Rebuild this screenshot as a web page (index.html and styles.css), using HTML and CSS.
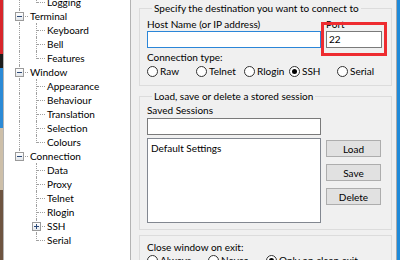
FILE: index.html
```html
<!DOCTYPE html>
<html>

<head>
  <title>PuTTY Configuration</title>
  <link rel="stylesheet" href="styles.css">
</head>

<body>
  <div class="screen">
    <div class="desk desk-left"></div>
    <div class="window">
      <!-- Category tree -->
      <div class="tree">
        <ul class="tree-list">
          <li class="row"><span class="c root-first"><b class="box minus"></b></span><span class="txt">Session</span></li>
          <li class="row"><span class="c line"></span><span class="c elbow"></span><span class="txt">Logging</span></li>
          <li class="row"><span class="c root"><b class="box minus"></b></span><span class="txt">Terminal</span></li>
          <li class="row"><span class="c line"></span><span class="c tee"></span><span class="txt">Keyboard</span></li>
          <li class="row"><span class="c line"></span><span class="c tee"></span><span class="txt">Bell</span></li>
          <li class="row"><span class="c line"></span><span class="c elbow"></span><span class="txt">Features</span></li>
          <li class="row"><span class="c root"><b class="box minus"></b></span><span class="txt">Window</span></li>
          <li class="row"><span class="c line"></span><span class="c tee"></span><span class="txt">Appearance</span></li>
          <li class="row"><span class="c line"></span><span class="c tee"></span><span class="txt">Behaviour</span></li>
          <li class="row"><span class="c line"></span><span class="c tee"></span><span class="txt">Translation</span></li>
          <li class="row"><span class="c line"></span><span class="c tee"></span><span class="txt">Selection</span></li>
          <li class="row"><span class="c line"></span><span class="c elbow"></span><span class="txt">Colours</span></li>
          <li class="row"><span class="c root-last"><b class="box minus"></b></span><span class="txt">Connection</span></li>
          <li class="row"><span class="c"></span><span class="c tee"></span><span class="txt">Data</span></li>
          <li class="row"><span class="c"></span><span class="c tee"></span><span class="txt">Proxy</span></li>
          <li class="row"><span class="c"></span><span class="c tee"></span><span class="txt">Telnet</span></li>
          <li class="row"><span class="c"></span><span class="c tee"></span><span class="txt">Rlogin</span></li>
          <li class="row"><span class="c"></span><span class="c tee"><b class="box plus"></b></span><span class="txt">SSH</span></li>
          <li class="row"><span class="c"></span><span class="c elbow"></span><span class="txt">Serial</span></li>
        </ul>
      </div>

      <!-- Session panel -->
      <div class="panel">
        <div class="group group-dest">
          <div class="group-title">Specify the destination you want to connect to</div>
          <div class="host-row">
            <div class="field host-field">
              <div class="label">Host Name (or IP address)</div>
              <div class="edit focused"></div>
            </div>
            <div class="field port-field">
              <div class="label">Port</div>
              <div class="edit">22</div>
            </div>
          </div>
          <div class="label type-label">Connection type:</div>
          <div class="radios conn-radios">
            <span class="radio"><i class="dot"></i>Raw</span>
            <span class="radio"><i class="dot"></i>Telnet</span>
            <span class="radio"><i class="dot"></i>Rlogin</span>
            <span class="radio"><i class="dot checked"></i>SSH</span>
            <span class="radio"><i class="dot"></i>Serial</span>
          </div>
          <div class="highlight"></div>
        </div>

        <div class="group group-saved">
          <div class="group-title">Load, save or delete a stored session</div>
          <div class="label">Saved Sessions</div>
          <div class="edit saved-edit"></div>
          <div class="saved-row">
            <div class="listbox">
              <div class="list-item">Default Settings</div>
            </div>
            <div class="buttons">
              <button class="btn">Load</button>
              <button class="btn">Save</button>
              <button class="btn">Delete</button>
            </div>
          </div>
        </div>

        <div class="group group-close">
          <div class="label close-label">Close window on exit:</div>
          <div class="radios close-radios">
            <span class="radio"><i class="dot"></i>Always</span>
            <span class="radio"><i class="dot"></i>Never</span>
            <span class="radio"><i class="dot checked"></i>Only on clean exit</span>
          </div>
        </div>
      </div>
    </div>
    <div class="desk desk-right"></div>
  </div>
</body>

</html>
```

FILE: styles.css
```css
/* styles.css */
body {
  margin: 0;
  width: 400px;
  height: 260px;
  overflow: hidden;
  font-family: Lato, "Noto Sans", sans-serif;
  font-size: 10px;
  color: #000;
}

/* Screen */
.screen {
  display: flex;
  height: 260px;
}

/* Desktop strips */
.desk {
  width: 3px;
  flex: none;
}

.desk-left {
  background: linear-gradient(to bottom, #d8262b 0 54px, #1c1c1c 54px 68px, #2b8ad6 68px 128px, #cdbfa9 128px 190px, #6e5440 190px 260px);
}

.desk-right {
  background-color: #1f8ad9;
}

/* Window */
.window {
  flex: 1;
  display: flex;
  background-color: #f0f0f0;
  border-right: 1px solid #a9a9a9;
}

/* Tree */
.tree {
  width: 128px;
  flex: none;
  box-sizing: border-box;
  background-color: #fff;
  border-left: 1px solid #b4b4b4;
  border-right: 1px solid #b4b4b4;
  padding-left: 7px;
  overflow: hidden;
}

.tree-list {
  list-style: none;
  margin: -19px 0 0;
  padding: 0;
}

.row {
  display: flex;
  height: 14px;
  line-height: 14px;
}

.txt {
  padding-left: 2px;
  white-space: nowrap;
}

/* Tree guide cells */
.c {
  position: relative;
  width: 17px;
  height: 14px;
  flex: none;
}

.c::before,
.c::after {
  content: "";
  position: absolute;
}

.line::before,
.tee::before,
.root::before {
  left: 8px;
  top: 0;
  bottom: 0;
  border-left: 1px dotted #a0a0a0;
}

.elbow::before,
.root-last::before {
  left: 8px;
  top: 0;
  height: 8px;
  border-left: 1px dotted #a0a0a0;
}

.root-first::before {
  left: 8px;
  top: 7px;
  bottom: 0;
  border-left: 1px dotted #a0a0a0;
}

.tee::after,
.elbow::after,
.root::after,
.root-first::after,
.root-last::after {
  left: 9px;
  top: 7px;
  width: 8px;
  border-top: 1px dotted #a0a0a0;
}

/* Expander boxes */
.box {
  position: absolute;
  left: 4px;
  top: 3px;
  width: 9px;
  height: 9px;
  box-sizing: border-box;
  border: 1px solid #9a9a9a;
  background: linear-gradient(#ffffff, #e3e6ea);
  z-index: 1;
}

.box::before,
.box::after {
  content: "";
  position: absolute;
  background-color: #2c4a78;
}

.box::before {
  left: 1px;
  top: 3px;
  width: 5px;
  height: 1px;
}

.plus::after {
  left: 3px;
  top: 1px;
  width: 1px;
  height: 5px;
}

/* Panel */
.panel {
  padding-left: 8px;
  width: 253px;
  flex: none;
}

/* Group box */
.group {
  position: relative;
  border: 1px solid #dcdcdc;
}

.group-title {
  margin: -8px 0 0 5px;
  padding: 0 2px;
  width: fit-content;
  line-height: 14px;
  background-color: #f0f0f0;
  white-space: nowrap;
}

.label {
  line-height: 14px;
  white-space: nowrap;
}

/* Destination group */
.group-dest {
  margin-top: 8px;
  padding: 0 9px 7px 7px;
}

.host-row {
  display: flex;
  gap: 5px;
  margin-top: 2px;
}

.host-field {
  width: 174px;
}

.port-field {
  width: 56px;
}

.edit {
  height: 17px;
  box-sizing: border-box;
  background-color: #fff;
  border: 1px solid #7a7a7a;
  padding-left: 2px;
  line-height: 15px;
}

.edit.focused {
  border-color: #2b86d8;
}

.type-label {
  margin-top: 3px;
  line-height: 13px;
}

/* Radios */
.radios {
  display: grid;
  line-height: 14px;
  white-space: nowrap;
}

.conn-radios {
  grid-template-columns: 49px 48px 45px 48px auto;
}

.close-radios {
  grid-template-columns: 61px 58px auto;
}

.radio {
  display: flex;
  align-items: center;
  gap: 2px;
}

.dot {
  width: 11px;
  height: 11px;
  box-sizing: border-box;
  border: 1px solid #333;
  border-radius: 50%;
  background-color: #fff;
  display: flex;
  align-items: center;
  justify-content: center;
}

.dot.checked::after {
  content: "";
  width: 5px;
  height: 5px;
  border-radius: 50%;
  background-color: #000;
}

/* Annotation box */
.highlight {
  position: absolute;
  left: 181px;
  top: 13px;
  width: 66px;
  height: 34px;
  box-sizing: border-box;
  border: 3px solid #ee2c30;
}

/* Saved sessions group */
.group-saved {
  margin-top: 10px;
  padding: 0 9px 6px 7px;
}

.saved-edit {
  width: 174px;
  margin-top: 1px;
}

.saved-row {
  display: flex;
  gap: 5px;
  margin-top: 3px;
}

.listbox {
  width: 174px;
  height: 85px;
  box-sizing: border-box;
  background-color: #fff;
  border: 1px solid #828790;
  padding: 2px 0 0 3px;
}

.list-item {
  line-height: 14px;
}

.buttons {
  display: flex;
  flex-direction: column;
  gap: 7px;
  margin-top: 2px;
}

.btn {
  width: 55px;
  height: 17px;
  padding: 0;
  font: inherit;
  color: #000;
  background-color: #e1e1e1;
  border: 1px solid #adadad;
}

/* Close window group */
.group-close {
  margin-top: 5px;
  padding: 5px 9px 10px 7px;
}

.close-label {
  line-height: 12px;
}
```
